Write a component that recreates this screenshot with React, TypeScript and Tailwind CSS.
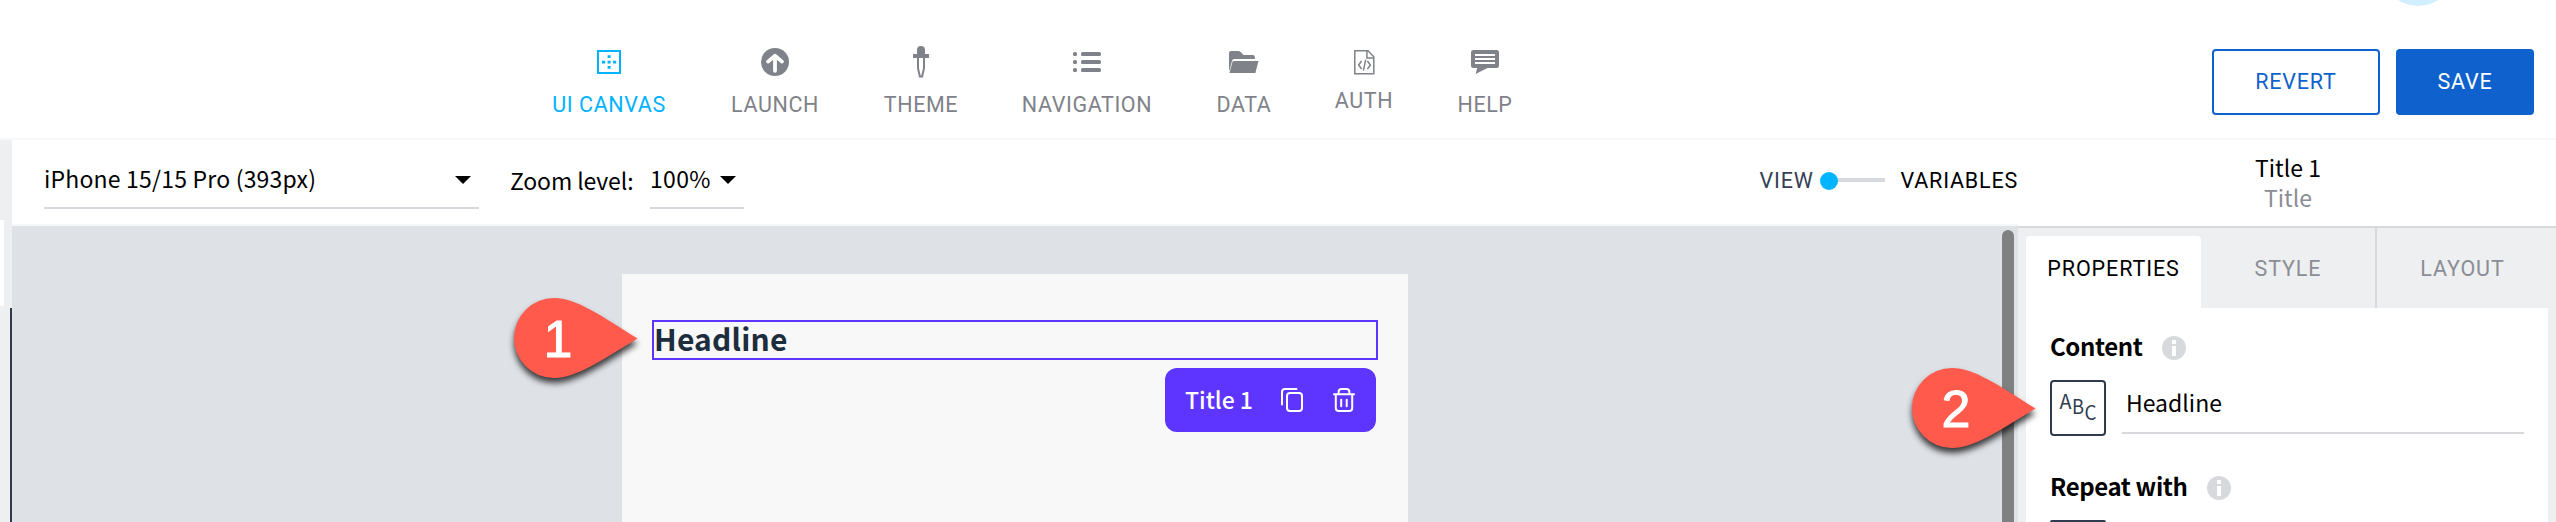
import type { ReactNode } from "react";

const CanvasIcon = () => (
  <svg width="24" height="24" viewBox="0 0 24 24" fill="none">
    <rect x="1" y="1" width="22" height="22" stroke="currentColor" strokeWidth="2" />
    <path
      fill="currentColor"
      d="M10.6 5.2h3v2.8h-3zM10.6 10.7h3v2.7h-3zM10.6 16h3v2.8h-3zM5 10.7h3.2v2.7H5zM16 10.7h3.2v2.7H16z"
    />
  </svg>
);

const LaunchIcon = () => (
  <svg width="28" height="28" viewBox="0 0 28 28" fill="none">
    <circle cx="14" cy="14" r="14" fill="currentColor" />
    <path d="M14 22.8V8.4M7 13.6L14 7.8l7 5.800" stroke="#fff" strokeWidth="3.800" strokeLinecap="round" strokeLinejoin="round" />
  </svg>
);

const ThemeIcon = () => (
  <svg width="16" height="32" viewBox="0 0 16 32" fill="none">
    <path fill="currentColor" d="M4 4a4 4 0 0 1 8 0v4h4v4H0V8h4z" />
    <path d="M5 11v10.5c0 3 1.4 5 1.8 9h2.4c.4-4 1.8-6 1.8-9V11" stroke="currentColor" strokeWidth="2" />
  </svg>
);

const NavigationIcon = () => (
  <svg width="28" height="20" viewBox="0 0 28 20" fill="currentColor">
    <rect width="4" height="4" rx="1.6" />
    <rect y="8" width="4" height="4" rx="1.6" />
    <rect y="16" width="4" height="4" rx="1.6" />
    <rect x="8" width="20" height="4" rx="1.6" />
    <rect x="8" y="8" width="20" height="4" rx="1.6" />
    <rect x="8" y="16" width="20" height="4" rx="1.6" />
  </svg>
);

const DataIcon = () => (
  <svg width="30" height="22" viewBox="0 0 29 22" preserveAspectRatio="none" fill="currentColor">
    <path d="M0 2Q0 0 2 0h7q1 0 2 .8L14 4h9q2 0 2 2v2H5.2Q3.400 8 3 9.500L.6 19H0z" />
    <path d="M4.300 10H28.500l-3 12H.4L3.400 10.700Q3.600 10 4.300 10z" />
  </svg>
);

const AuthIcon = () => (
  <svg width="21" height="25" viewBox="0 0 21 25" fill="none" stroke="currentColor" strokeWidth="1.500">
    <path d="M.8.800H14l5.800 6v17H.8z" />
    <path d="M12.900 1v7h6.800" />
    <path d="M7.600 11L4.600 15l3 4M13.400 11l3 4-3 4M11.700 9.600L9.400 20.600" />
  </svg>
);

const HelpIcon = () => (
  <svg width="28" height="24" viewBox="0 0 28 24" fill="none">
    <path fill="currentColor" d="M2.500 0h23Q28 0 28 2.500v13q0 2.500-2.500 2.500H16.500L4.600 24 6.200 18H2.500Q0 18 0 15.500v-13Q0 0 2.500 0z" />
    <path d="M4 5h20M4 9h20M4 13h20" stroke="#fff" strokeWidth="2" />
  </svg>
);

const CopyIcon = () => (
  <svg width="22" height="24" viewBox="0 0 22 24" fill="none" stroke="#fff" strokeWidth="2" strokeLinecap="round">
    <rect x="6" y="5" width="15" height="18" rx="3" />
    <path d="M1 16.500V4q0-3 3-3h11.500" />
  </svg>
);

const TrashIcon = () => (
  <svg width="22" height="24" viewBox="0 0 22 24" fill="none" stroke="#fff" strokeWidth="2" strokeLinecap="round">
    <path d="M1 6.300h20M2.800 6.500V20q0 3 3 3h10.400q3 0 3-3V6.500M5.600 6V4q0-3 3-3h4.800q3 0 3 3v2M8.200 11.800v6.400M13.700 11.800v6.400" />
  </svg>
);

const Caret = () => (
  <svg width="16" height="8" viewBox="0 0 16 8">
    <path d="M0 0h16L8 8z" />
  </svg>
);

const InfoIcon = () => (
  <svg width="24" height="24" viewBox="0 0 24 24">
    <circle cx="12" cy="12" r="12" fill="#d8d9dd" />
    <path fill="#fff" d="M10 4h4v4h-4zM10 10h4v10h-4z" />
  </svg>
);

const AbcIcon = () => (
  <svg width="52" height="52" viewBox="0 0 52 52" className="font-['Noto_Sans_CJK_SC',sans-serif]" fill="#2f3c4f">
    <text x="7.500" y="26.500" fontSize="20" textLength="12" lengthAdjust="spacingAndGlyphs">A</text>
    <text x="20" y="32" fontSize="19.500" textLength="12" lengthAdjust="spacingAndGlyphs">B</text>
    <text x="32.500" y="38" fontSize="19.500" textLength="12" lengthAdjust="spacingAndGlyphs">C</text>
  </svg>
);

const Marker = ({ digit }: { digit: string }) => (
  <svg width="144" height="104" viewBox="0 0 144 104" className="overflow-visible drop-shadow-[0px_5px_3px_rgba(0,0,0,0.75)]">
    <path d="M40 0C62 0 86 17 123.500 40.500C86 63 62 80 40 80A40 40 0 0 1 40 0z" fill="#ff5a4c" />
    <text x="44" y="59" textAnchor="middle" fontSize="52" fill="#fff" stroke="#fff" strokeWidth="1" className="font-['Liberation_Sans',sans-serif]">
      {digit}
    </text>
  </svg>
);

const navItems: { label: string; icon: ReactNode; box: string }[] = [
  { label: "UI CANVAS", icon: <CanvasIcon />, box: "w-[116px] text-[#00b2ff]" },
  { label: "LAUNCH", icon: <LaunchIcon />, box: "w-[88px]" },
  { label: "THEME", icon: <ThemeIcon />, box: "w-[76px]" },
  { label: "NAVIGATION", icon: <NavigationIcon />, box: "w-[128px]" },
  { label: "DATA", icon: <DataIcon />, box: "w-[58px]" },
  { label: "AUTH", icon: <AuthIcon />, box: "w-[54px]" },
  { label: "HELP", icon: <HelpIcon />, box: "w-[60px]" },
];

function Header() {
  return (
    <header className="relative flex h-[140px] shrink-0 items-start border-b-2 border-[#f7f8f9] bg-white font-[Roboto,sans-serif]">
      <nav className="ml-[551px] flex gap-16 pt-[46px] text-[#808289]">
        {navItems.map(({ label, icon, box }) => (
          <div key={label} className={`flex flex-col items-center ${box}`}>
            <div className="flex h-8 items-center">{icon}</div>
            <span
              className={`text-[21.5px] leading-7 tracking-[0.6px] whitespace-nowrap ${label === "AUTH" ? "mt-[9px]" : "mt-[13px]"}`}
            >
              {label}
            </span>
          </div>
        ))}
      </nav>
      <div className="mt-[49px] mr-[22px] ml-auto flex gap-4 text-[21.5px] tracking-[0.8px]">
        <button className="h-[66px] w-[168px] rounded border-2 border-[#0f62cd] pt-px text-[#0f62cd]">REVERT</button>
        <button className="h-[66px] w-[138px] rounded bg-[#0f62cd] pt-px text-white">SAVE</button>
      </div>
      <div className="absolute -top-[66px] left-[2382px] size-[72px] rounded-full bg-[#d1efff]" />
    </header>
  );
}

function Toolbar() {
  return (
    <div className="flex h-[86px] shrink-0 border-b-2 border-[#f5f7f8] bg-white pt-[18px]">
      <div className="ml-8 flex h-[51px] w-[435px] justify-between border-b-2 border-[#d8d9de] pr-2">
        <span className="text-[23px] leading-[40px] tracking-[0.2px]">iPhone 15/15 Pro (393px)</span>
        <span className="pt-[18px]"><Caret /></span>
      </div>
      <span className="mt-[2px] ml-[31px] w-[140px] text-[23px] leading-[40px] tracking-[-0.1px] whitespace-nowrap">Zoom level:</span>
      <div className="flex h-[51px] w-[94px] justify-between border-b-2 border-[#d8d9de] pr-2">
        <span className="text-[23px] leading-[40px] tracking-[0.3px]">100%</span>
        <span className="pt-[18px]"><Caret /></span>
      </div>
      <div className="mt-[7px] ml-auto flex h-[30px] items-center font-[Roboto,sans-serif] text-[21.5px] leading-[30px] tracking-[0.8px]">
        <span className="pt-px text-[#344154]">VIEW</span>
        <span className="mt-[2px] ml-[6px] size-[18px] rounded-full bg-[#00b4ff]" />
        <span className="h-1 w-[47px] bg-[#d8d9de]" />
        <span className="ml-4 pt-px">VARIABLES</span>
      </div>
    </div>
  );
}

function Canvas() {
  return (
    <div className="flex grow bg-[#dee1e6]">
      <div className="mt-12 ml-[610px] w-[786px] bg-[#f8f8f8] px-[30px] pt-[46px]">
        <div className="h-10 border-2 border-[#5e35ff] text-[30px] font-bold text-[#1d2d3e]">
          <div className="leading-[32px] tracking-[0.2px]">Headline</div>
        </div>
        <div className="mt-2 mr-[2px] ml-auto flex h-16 w-[211px] items-center rounded-xl bg-[#5e35ff] pl-5 text-white">
          <span className="w-24 pb-[2px] text-[23px] leading-8 font-medium">Title 1</span>
          <CopyIcon />
          <span className="ml-[30px]"><TrashIcon /></span>
        </div>
      </div>
      <div className="mt-1 mr-1 ml-auto w-3 rounded-t-full bg-[#7f8081]" />
    </div>
  );
}

function Panel() {
  return (
    <aside className="flex w-[538px] shrink-0 flex-col bg-[#eeeff1]">
      <div className="flex h-[88px] shrink-0 flex-col items-center border-b-2 border-[#d8d9dd] bg-white pt-3 pl-[2px] text-[23px] leading-[30px]">
        <span>Title 1</span>
        <span className="text-[#8b8d95]">Title</span>
      </div>
      <div className="flex h-20 shrink-0 px-2 text-center font-[Roboto,sans-serif] text-[21.5px] leading-[30px] tracking-[0.9px] text-[#8b8d95]">
        <div className="mt-2 w-[175px] rounded-t bg-white pt-[18px] text-black">PROPERTIES</div>
        <div className="w-[176px] border-r-2 border-[#d8d9dd] pt-[26px]">STYLE</div>
        <div className="grow pt-[26px]">LAYOUT</div>
      </div>
      <div className="mx-2 grow bg-white px-6 pt-6">
        <div className="flex h-8 items-center">
          <span className="w-[112px] pb-[4px] text-[24px] leading-8 font-bold tracking-[-0.4px]">Content</span>
          <InfoIcon />
        </div>
        <div className="mt-4 flex h-14">
          <div className="size-14 rounded border-2 border-[#2f3c4f]"><AbcIcon /></div>
          <div className="ml-4 h-[54px] w-[402px] border-b-2 border-[#d8d9dd] pl-1 text-[23px] leading-[44px]">Headline</div>
        </div>
        <div className="mt-9 flex h-8 items-center">
          <span className="w-[157px] pb-[4px] text-[24px] leading-8 font-bold tracking-[-0.4px] whitespace-nowrap">Repeat with</span>
          <InfoIcon />
        </div>
        <div className="mt-4 h-0.5 w-14 rounded-t bg-[#2f3c4f]" />
      </div>
    </aside>
  );
}

export default function App() {
  return (
    <div className="relative flex h-[522px] w-[2556px] flex-col overflow-hidden bg-white font-['Noto_Sans_CJK_SC','Noto_Sans',sans-serif] text-black">
      <Header />
      <div className="flex min-h-0 grow">
        <div className="flex w-3 shrink-0 flex-col bg-[#eeeff1] pt-20">
          <div className="h-[86px] w-1 bg-white" />
          <div className="mt-[2px] ml-auto w-[2px] grow bg-[#2f3c4f]" />
        </div>
        <main className="flex grow flex-col">
          <Toolbar />
          <Canvas />
        </main>
        <Panel />
      </div>
      <div className="absolute top-[298px] left-[514px]"><Marker digit="1" /></div>
      <div className="absolute top-[368px] left-[1912px]"><Marker digit="2" /></div>
    </div>
  );
}
